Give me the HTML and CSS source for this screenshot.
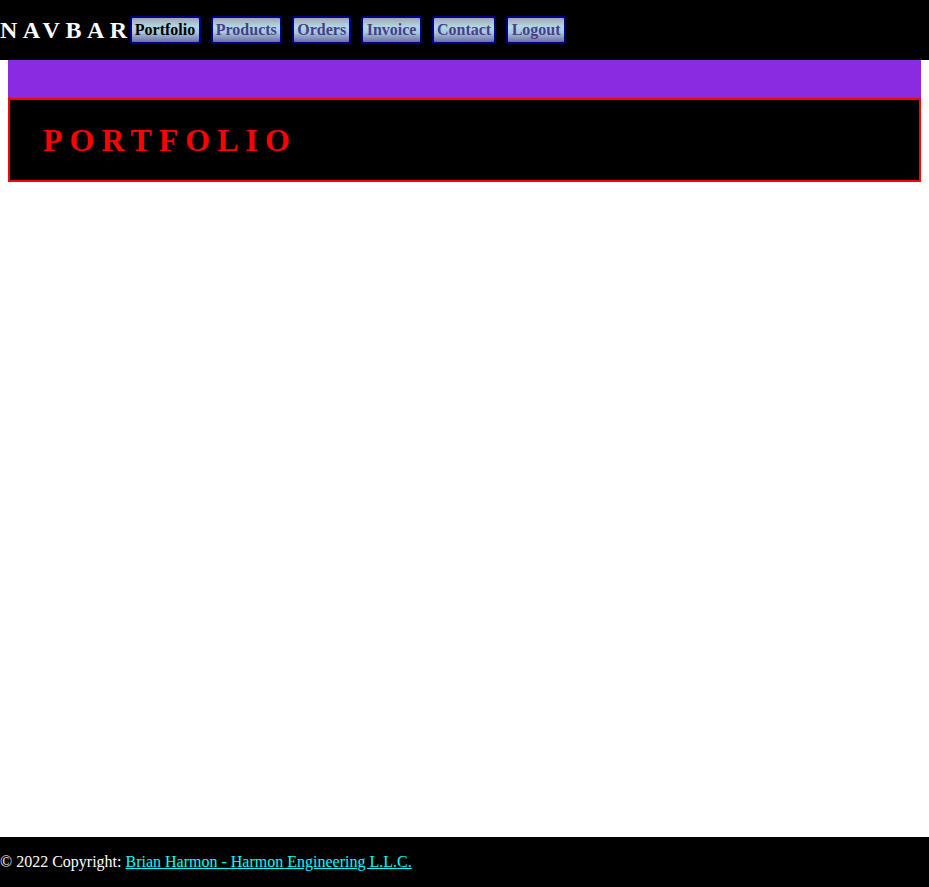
FILE: index.html
```html
<!DOCTYPE html>
<html>
<head>
<meta charset="utf-8">
<title>Portfolio</title>
<link rel="stylesheet" href="styles.css">
</head>
<body>
<div class="page">
  <nav class="navbar">
    <span class="brand">NAVBAR</span>
    <ul class="nav-links">
      <li><a class="nav-btn active" href="#">Portfolio</a></li>
      <li><a class="nav-btn" href="#">Products</a></li>
      <li><a class="nav-btn" href="#">Orders</a></li>
      <li><a class="nav-btn" href="#">Invoice</a></li>
      <li><a class="nav-btn" href="#">Contact</a></li>
      <li><a class="nav-btn" href="#">Logout</a></li>
    </ul>
  </nav>
  <main class="main">
    <div class="band"></div>
    <section class="title-box">
      <h1 class="title">PORTFOLIO</h1>
    </section>
  </main>
  <footer class="footer">© 2022 Copyright: <a class="footer-link" href="#">Brian Harmon - Harmon Engineering L.L.C.</a></footer>
</div>
</body>
</html>
```

FILE: styles.css
```css
html, body {
  margin: 0;
  padding: 0;
  background: #ffffff;
  font-family: "Liberation Serif", "Times New Roman", serif;
}

.page {
  min-height: 100vh;
  display: flex;
  flex-direction: column;
}

.navbar {
  height: 60px;
  background: #000000;
  display: flex;
  align-items: center;
}

.brand {
  color: #ffffff;
  font-weight: bold;
  font-size: 24px;
  letter-spacing: 5.5px;
  margin-right: -3px;
  line-height: 1;
}

.nav-links {
  list-style: none;
  margin: 0;
  padding: 0;
  display: flex;
  gap: 10px;
}

.nav-btn {
  display: block;
  padding: 4px 3.25px;
  border: 2px solid #00008b;
  border-radius: 3px;
  background: linear-gradient(to bottom, #a3a3b8 0%, #b0d8e4 35%, #a8c8dc 60%, #6e6ea0 100%);
  color: #483d8b;
  font-weight: bold;
  font-size: 16px;
  line-height: 16px;
  text-decoration: none;
}

.nav-btn.active {
  color: #000000;
}

.main {
  flex: 1;
  margin: 0 8px;
}

.band {
  height: 38px;
  background: #8a2be2;
}

.title-box {
  background: #000000;
  border: 2px solid #ff0000;
  height: 80px;
  display: flex;
  align-items: center;
  padding-left: 33px;
}

.title {
  margin: 0;
  color: #ff0000;
  font-size: 32px;
  font-weight: bold;
  letter-spacing: 7px;
  line-height: 1;
}

.footer {
  height: 50px;
  line-height: 50px;
  background: #000000;
  color: #ffffff;
  font-size: 16px;
}

.footer-link {
  color: #00ffff;
  text-decoration: underline;
}
```
